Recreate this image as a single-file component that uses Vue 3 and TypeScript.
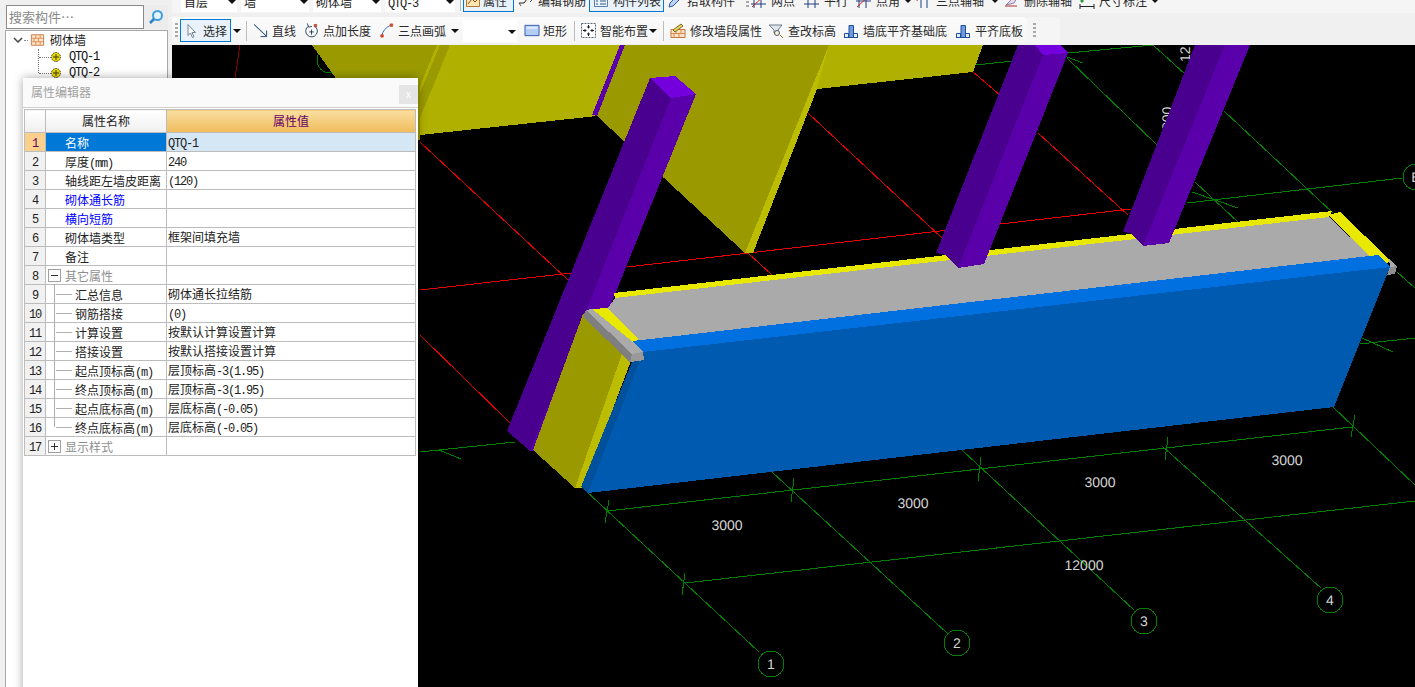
<script setup lang="ts">
interface Shape { d: string; s?: string; f?: string }
interface Tool { label: string; icon: string; w: number; on?: boolean; menu?: boolean; tight?: boolean }
interface Row { n: number; name: string; value: string; kind?: string }

const brick: Shape[] = [
  { d: 'M1 2h14v12H1z', s: '#c8743a', f: '#fbe3c8' },
  { d: 'M1 6h14M1 10h14M6 2v4M11 2v4M4 6v4M9 6v4M6 10v4M11 10v4', s: '#d8894c' },
]
const wallBase: Shape[] = [
  { d: 'M1 14.500h14M1.500 14.500v-4h4v4M10.500 14.500v-4h4v4', s: '#1f4f9a', f: '#e4eefb' },
  { d: 'M6 14.500V2.500h4.500v12z', s: '#1f4f9a', f: '#6f9ade' },
]
const icons: Record<string, Shape[]> = {
  attr: [
    { d: 'M1.500 3.500h13v10h-13z', s: '#b07a30', f: '#fbe7b4' },
    { d: 'M3 11l4-5 3 3 4-4', s: '#a04a10' },
  ],
  rebar: [
    { d: 'M1 10h5l3-4h7', s: '#222' },
    { d: 'M12 3l3 3-3 3M3 13l-2-3', s: '#555' },
  ],
  list: [
    { d: 'M1.500 2.500h13v11h-13z', s: '#5a7fa8', f: '#eaf2fb' },
    { d: 'M3 5h2M7 5h6M3 8h2M7 8h6M3 11h2M7 11h6', s: '#35577f' },
  ],
  pick: [
    { d: 'M2 14l1-4 8-8 3 3-8 8z', s: '#2a5ab0', f: '#bcd4f4' },
  ],
  two: [
    { d: 'M3 3v12M10 3v12M0 6h15M0 11h15', s: '#1f3f80' },
    { d: 'M1 14L14 2', s: '#d02020' },
  ],
  par: [
    { d: 'M4 2v13M11 2v13M0 6h15M0 11h15', s: '#1f3f80' },
  ],
  angle: [
    { d: 'M3 3v12M10 3v12M0 8h15', s: '#1f3f80' },
    { d: 'M1 14L14 2', s: '#d02020' },
  ],
  three: [
    { d: 'M5 3v12M11 3v12M1 6h14', s: '#1f3f80' },
    { d: 'M1 8Q2 2 8 1', s: '#d02020' },
  ],
  del: [
    { d: 'M2 12l6-6 6-3-4 7z', s: '#8a7aa8', f: '#e6def2' },
    { d: 'M1 13h12', s: '#b03030' },
  ],
  dim: [
    { d: 'M1 11v5M15 11v5M1 13.500h14', s: '#222' },
    { d: 'M2 2h2v2H2zM7 2h2v2H7zM2 7h2v2H2z', s: '#2a9a3a', f: '#2a9a3a' },
  ],
  select: [
    { d: 'M4 1.500v11l2.500-2.500 2 4.500 1.500-.7-2-4.300h3.500z', s: '#7a8696', f: '#fbfbfb' },
  ],
  line: [
    { d: 'M1 1.500l13 12.500', s: '#1f4468' },
    { d: 'M14.500 8v6.500H8', s: '#1f4468' },
    { d: 'M1.500 1.500l12.500 12', s: '#3f6a94' },
  ],
  extend: [
    { d: 'M4.500 3.500a6.200 6.200 0 1 0 6-.6', s: '#23405f' },
    { d: 'M3.500 0.500l1.500 4 3.500-1', s: '#23405f' },
    { d: 'M8 7v5.500M5.500 9.500h5', s: '#23405f' },
    { d: 'M11 1.500h2.500v2.500H11z', s: '#c0503a', f: '#c0503a' },
  ],
  arc: [
    { d: 'M3 14Q4 6 13 2', s: '#2a6ab0' },
    { d: 'M2 12.500h2.500v2.500H2zM12 1h2.500v2.500H12z', s: '#d0492c', f: '#d0492c' },
  ],
  rect: [
    { d: 'M.500 2.500h15v11H.500z', s: '#2a5ab0', f: '#b4ccf2' },
    { d: 'M2 4h12v2.500H2z', f: '#dbe7fa' },
  ],
  smart: [
    { d: 'M.500 .500h14v14H.500z', s: '#5a6a7a', f: '#fff' },
    { d: 'M7.500 2v3.500M6 4h3M7.500 13V9.500M6 11h3M2 7.500h3.500M4 6v3M13 7.500H9.500M11 6v3', s: '#222' },
  ],
  modify: [
    { d: 'M1 6.500h14v8H1z', s: '#c8743a', f: '#fbe3c8' },
    { d: 'M1 10.500h14M6 6.500v4M11 6.500v4M4 10.500v4M9 10.500v4', s: '#d8894c' },
    { d: 'M3 7l8-6 2 2-8 6z', s: '#7a6a20', f: '#e8d060' },
  ],
  check: [
    { d: 'M1 2h13l-4 5v3H6V7z', s: '#6a7a8a', f: '#dfe6ee' },
    { d: 'M12 12l3 3', s: '#a07020' },
    { d: 'M11.500 10a2.500 2.500 0 1 1-5 0 2.500 2.500 0 0 1 5 0z', s: '#556', f: '#f4f4d8' },
  ],
  wallBase,
}

const topTools: Tool[] = [
  { label: '属性', icon: 'attr', w: 51, on: true, tight: true },
  { label: '编辑钢筋', icon: 'rebar', w: 72 },
  { label: '构件列表', icon: 'list', w: 75, on: true },
  { label: '拾取构件', icon: 'pick', w: 79 },
]
const axisTools: Tool[] = [
  { label: '两点', icon: 'two', w: 53 },
  { label: '平行', icon: 'par', w: 52 },
  { label: '点角', icon: 'angle', w: 60, menu: true },
  { label: '三点辅轴', icon: 'three', w: 88, menu: true },
  { label: '删除辅轴', icon: 'del', w: 75 },
  { label: '尺寸标注', icon: 'dim', w: 85, menu: true },
]
const drawTools: Tool[] = [
  { label: '直线', icon: 'line', w: 51 },
  { label: '点加长度', icon: 'extend', w: 75 },
  { label: '三点画弧', icon: 'arc', w: 84, menu: true },
]
const placeTools: Tool[] = [
  { label: '修改墙段属性', icon: 'modify', w: 98 },
  { label: '查改标高', icon: 'check', w: 75 },
  { label: '墙底平齐基础底', icon: 'wallBase', w: 112 },
  { label: '平齐底板', icon: 'wallBase', w: 70 },
]

const rows: Row[] = [
  { n: 1, name: '名称', value: 'QTQ-1', kind: 'active' },
  { n: 2, name: '厚度(mm)', value: '240' },
  { n: 3, name: '轴线距左墙皮距离', value: '(120)' },
  { n: 4, name: '砌体通长筋', value: '', kind: 'link' },
  { n: 5, name: '横向短筋', value: '', kind: 'link' },
  { n: 6, name: '砌体墙类型', value: '框架间填充墙' },
  { n: 7, name: '备注', value: '' },
  { n: 8, name: '其它属性', value: '', kind: 'open' },
  { n: 9, name: '汇总信息', value: '砌体通长拉结筋', kind: 'child' },
  { n: 10, name: '钢筋搭接', value: '(0)', kind: 'child' },
  { n: 11, name: '计算设置', value: '按默认计算设置计算', kind: 'child' },
  { n: 12, name: '搭接设置', value: '按默认搭接设置计算', kind: 'child' },
  { n: 13, name: '起点顶标高(m)', value: '层顶标高-3(1.95)', kind: 'child' },
  { n: 14, name: '终点顶标高(m)', value: '层顶标高-3(1.95)', kind: 'child' },
  { n: 15, name: '起点底标高(m)', value: '层底标高(-0.05)', kind: 'child' },
  { n: 16, name: '终点底标高(m)', value: '层底标高(-0.05)', kind: 'child last' },
  { n: 17, name: '显示样式', value: '', kind: 'closed' },
]

// latin goes in a narrower mono run so it keeps the 6px cell of the original font
function runs(text: string): { t: string; latin: boolean }[] {
  return (text.match(/[\x00-\x7f]+|[^\x00-\x7f]+/g) || []).map((t) => ({ t, latin: t.charCodeAt(0) < 128 }))
}

const GREEN = '#008000'
const RED = '#e80000'
const lines: [string, string][] = [
  ['#8a0000', '240,45 235,78'],
  [RED, '420,142 568,280'],
  [RED, '420,290 572,273'],
  [RED, '627,267 1122,210 1131,209'],
  [RED, '420,335 510,423'],
  [RED, '748,253 772,275'],
  [RED, '808,113 942,238'],
  [RED, '973,72 1000,95'],
  [RED, '1038,133 1128,215'],
  [GREEN, '607,511 1352,427'],
  [GREEN, '685,583 1415,501'],
  [GREEN, '585,490 759,652'],
  [GREEN, '772,472 947,633'],
  [GREEN, '962,450 1134,610'],
  [GREEN, '1162,446 1321,588'],
  [GREEN, '1333,407 1415,485'],
  [GREEN, '609,500 605,523'],
  [GREEN, '794,478 791,502'],
  [GREEN, '981,457 978,481'],
  [GREEN, '1168,437 1165,460'],
  [GREEN, '1355,415 1351,437'],
  [GREEN, '685,573 682,595'],
  [GREEN, '976,65 1013,61'],
  [GREEN, '1068,53 1153,45'],
  [GREEN, '1187,203 1402,178'],
  [GREEN, '1067,58 1157,145'],
  [GREEN, '1195,182 1238,222'],
  [GREEN, '1067,57 1083,63'],
  [GREEN, '1192,192 1238,208'],
  [GREEN, '1153,45 1185,74'],
  [GREEN, '1224,111 1333,213'],
  [GREEN, '1397,272 1415,288'],
  [GREEN, '1360,344 1415,338'],
  [GREEN, '1362,338 1393,352'],
  [GREEN, '420,452 515,442'],
  [GREEN, '439,450 461,459'],
]
const OLIVE = '#9a9a00'
const LIGHT = '#b0b000'
const STRIP = '#bcbc00'
const P_DARK = '#4a008f'
const P_LIGHT = '#5a00aa'
const P_CAP = '#7400de'
const backWall: [string, string][] = [
  [OLIVE, '312,45 450,45 420,118 420,140 380,140'],
  [LIGHT, '437,45 440,45 420,93 420,86'],
  [LIGHT, '450,45 625,45 597,116 420,135 420,118'],
  [P_LIGHT, '620,45 625,45 597,116 592,115'],
  [OLIVE, '625,45 829,45 745,253 597,116'],
  [STRIP, '829,45 817,89 753,253 745,253'],
  [LIGHT, '829,45 983,45 973,72 817,89'],
]
const frontWall: [string, string][] = [
  [P_DARK, '650,78 671,98 530,451 507,431'],
  [P_LIGHT, '671,98 696,94 552,450 530,451'],
  [P_CAP, '650,78 675,76 696,94 671,98'],
  [OLIVE, '583,314 630,358 575,488 533,450'],
  [STRIP, '622,354 632,358 583,488 575,488'],
  ['#00509c', '632,362 643,358 588,493 581,487'],
  ['#005bb0', '643,352 1390,267 1334,407 588,493'],
  ['#aaaaaa', '615,298 1329,217 1370,256 633,341 608,308'],
  ['#e8e800', '614,293 1332,211 1329,217 615,298'],
  ['#e8e800', '1328,215 1340,212 1390,260 1387,263 1370,256'],
  ['#e8e800', '592,309 607,308 639,339 633,342'],
  ['#aaaaaa', '586,310 592,309 633,342 643,352 632,354'],
  ['#7f7f7f', '583,317 586,310 632,354 630,362'],
  ['#999999', '632,354 643,352 644,360 630,362'],
  ['#aaaaaa', '1389,259 1397,266 1390,267'],
  ['#8f8f8f', '1390,267 1397,266 1395,274 1387,275'],
  ['#0070e0', '633,341 1378,255 1390,267 643,352'],
  [P_DARK, '1018,45 1035,45 1043,55 958,268 946,255 936,253'],
  [P_LIGHT, '1043,55 1068,53 984,264 958,268'],
  [P_CAP, '1035,45 1060,45 1068,53 1043,55'],
  [P_DARK, '1195,45 1225,45 1143,246 1131,233 1123,232'],
  [P_LIGHT, '1225,45 1250,45 1169,243 1143,246'],
]
const bubbles = [
  { x: 771, y: 664, t: '1' },
  { x: 957, y: 643, t: '2' },
  { x: 1144, y: 621, t: '3' },
  { x: 1330, y: 600, t: '4' },
  { x: 1416, y: 177, t: 'B' },
]
const dims = [
  { x: 727, y: 530, t: '3000' },
  { x: 913, y: 508, t: '3000' },
  { x: 1100, y: 487, t: '3000' },
  { x: 1287, y: 465, t: '3000' },
  { x: 1084, y: 570, t: '12000' },
]
</script>

<template>
  <div class="app">
    <aside class="side">
      <div class="search">
        <div class="search-input">搜索构件…</div>
        <div class="search-btn">
          <svg width="16" height="16" viewBox="0 0 16 16" fill="none">
            <circle cx="9.500" cy="6.500" r="4.500" stroke="#3f9fe0" stroke-width="2" fill="#e4f3fd" />
            <path d="M6 10l-4 4" stroke="#2a80c8" stroke-width="2.500" />
          </svg>
        </div>
      </div>
      <div class="tree">
        <div class="tree-root">
          <svg class="chev" width="10" height="6" viewBox="0 0 10 6" fill="none"><path d="M1 1l4 4 4-4" stroke="#444" stroke-width="1.500" /></svg>
          <span class="dots"></span>
          <svg width="15" height="14" viewBox="0 0 16 16" fill="none">
            <path v-for="(sh, i) in brick" :key="i" :d="sh.d" :stroke="sh.s" :fill="sh.f || 'none'" />
          </svg>
          <span class="tree-label">砌体墙</span>
        </div>
        <div class="tree-kids">
          <div v-for="q in ['QTQ-1', 'QTQ-2']" :key="q" class="tree-kid">
            <span class="branch"></span>
            <svg width="10" height="10" viewBox="0 0 10 10"><circle cx="5" cy="5" r="4.500" fill="#e8d800" stroke="#3a3a10" stroke-dasharray="1.500 1" /><path d="M2 5h6M5 2v6" stroke="#3a3a10" /></svg>
            <span class="latin kid-label">{{ q }}</span>
          </div>
        </div>
      </div>
    </aside>

    <main class="main">
      <div class="bar bar-top">
        <div class="combo c1">首层<i class="caret"></i></div>
        <div class="combo c2">墙<i class="caret"></i></div>
        <div class="combo c3">砌体墙<i class="caret"></i></div>
        <div class="combo c4"><span class="latin">QTQ-3</span><i class="caret"></i></div>
        <span class="sep top-sep"></span>
        <div v-for="t in topTools" :key="t.label" class="tool" :class="{ on: t.on, tight: t.tight }" :style="{ width: t.w + 'px' }">
          <svg width="16" height="16" viewBox="0 0 16 16" fill="none"><path v-for="(sh, i) in icons[t.icon]" :key="i" :d="sh.d" :stroke="sh.s" :fill="sh.f || 'none'" /></svg>
          <span>{{ t.label }}</span>
        </div>
        <span class="grip"></span>
        <div v-for="t in axisTools" :key="t.label" class="tool" :style="{ width: t.w + 'px' }">
          <svg width="16" height="16" viewBox="0 0 16 16" fill="none"><path v-for="(sh, i) in icons[t.icon]" :key="i" :d="sh.d" :stroke="sh.s" :fill="sh.f || 'none'" /></svg>
          <span>{{ t.label }}</span>
          <i v-if="t.menu" class="caret inline"></i>
        </div>
      </div>

      <div class="bar bar-draw">
        <div class="strip">
          <span class="grip"></span>
          <div class="tool on pick-btn">
            <svg width="16" height="16" viewBox="0 0 16 16" fill="none"><path v-for="(sh, i) in icons.select" :key="i" :d="sh.d" :stroke="sh.s" :fill="sh.f || 'none'" /></svg>
            <span>选择</span>
          </div>
          <i class="caret arrow-slot"></i>
          <span class="sep s1"></span>
          <div v-for="t in drawTools" :key="t.label" class="tool" :style="{ width: t.w + 'px' }">
            <svg width="15" height="15" viewBox="0 0 16 16" fill="none"><path v-for="(sh, i) in icons[t.icon]" :key="i" :d="sh.d" :stroke="sh.s" :fill="sh.f || 'none'" /></svg>
            <span>{{ t.label }}</span>
            <i v-if="t.menu" class="caret inline"></i>
          </div>
          <div class="combo c5"><i class="caret"></i></div>
          <div class="tool rect-tool">
            <svg width="16" height="15" viewBox="0 0 16 16" fill="none"><path v-for="(sh, i) in icons.rect" :key="i" :d="sh.d" :stroke="sh.s" :fill="sh.f" /></svg>
            <span>矩形</span>
          </div>
          <span class="sep s2"></span>
          <div class="tool smart-tool">
            <svg width="15" height="15" viewBox="0 0 15 15" fill="none"><path v-for="(sh, i) in icons.smart" :key="i" :d="sh.d" :stroke="sh.s" :fill="sh.f || 'none'" :stroke-dasharray="i === 0 ? '2 1' : undefined" /></svg>
            <span>智能布置</span>
            <i class="caret after"></i>
          </div>
          <span class="sep s3"></span>
          <div v-for="t in placeTools" :key="t.label" class="tool" :style="{ width: t.w + 'px' }">
            <svg width="16" height="16" viewBox="0 0 16 16" fill="none"><path v-for="(sh, i) in icons[t.icon]" :key="i" :d="sh.d" :stroke="sh.s" :fill="sh.f || 'none'" /></svg>
            <span>{{ t.label }}</span>
          </div>
        </div>
        <div class="strip-end"><span class="grip"></span></div>
      </div>

      <svg class="scene" width="1243" height="642" viewBox="172 45 1243 642">
        <circle cx="330" cy="60" r="13" fill="none" :stroke="GREEN" />
        <rect x="327" y="61" width="2" height="2" fill="#ddd" />
        <polyline v-for="(l, i) in lines" :key="i" :points="l[1]" :stroke="l[0]" fill="none" />
        <text class="dim" transform="translate(1190 62) rotate(-90)">12</text>
        <text class="dim" transform="translate(1172 130) rotate(-90)">300</text>
        <polygon v-for="(b, i) in backWall" :key="'b' + i" :points="b[1]" :fill="b[0]" />
        <polygon v-for="(f, i) in frontWall" :key="'f' + i" :points="f[1]" :fill="f[0]" />
        <g v-for="b in bubbles" :key="b.t">
          <circle :cx="b.x" :cy="b.y" r="13" fill="#000" :stroke="GREEN" />
          <text class="dim mid" :x="b.x" :y="b.y + 5">{{ b.t }}</text>
        </g>
        <text v-for="d in dims" :key="d.x" class="dim mid" :x="d.x" :y="d.y">{{ d.t }}</text>
      </svg>
    </main>

    <section class="dialog">
      <header class="dialog-head">
        <span>属性编辑器</span>
        <button class="dialog-close">x</button>
      </header>
      <table class="grid">
        <colgroup><col class="c-n" /><col class="c-name" /><col class="c-value" /></colgroup>
        <thead>
          <tr><th class="num"></th><th class="h-name">属性名称</th><th class="h-value">属性值</th></tr>
        </thead>
        <tbody>
          <tr v-for="r in rows" :key="r.n" :class="r.kind">
            <td class="num"><div class="cell"><span class="latin">{{ r.n }}</span></div></td>
            <td class="name">
              <i v-if="r.kind === 'open' || r.kind === 'closed'" class="toggle"></i>
              <i v-if="r.kind && r.kind.startsWith('child')" class="twig"></i>
              <div class="cell"><span v-for="(run, i) in runs(r.name)" :key="i" :class="{ latin: run.latin }">{{ run.t }}</span></div>
            </td>
            <td class="value">
              <div class="cell"><span v-for="(run, i) in runs(r.value)" :key="i" :class="{ latin: run.latin }">{{ run.t }}</span></div>
            </td>
          </tr>
        </tbody>
      </table>
    </section>
  </div>
</template>

<style>
html, body { margin: 0; overflow: hidden; }
</style>

<style scoped>
.app {
  position: relative;
  display: flex;
  width: 1415px;
  height: 687px;
  overflow: hidden;
  background: #f0f0f0;
  font: 12px/16px "Noto Sans CJK SC", "Liberation Sans", sans-serif;
  color: #222;
}
.latin { font-family: "Liberation Mono", monospace; font-size: 12px; letter-spacing: -1.2px; color: inherit; }

/* left panel */
.side { width: 172px; flex: none; padding: 5px 4px 0 5px; box-sizing: border-box; display: flex; flex-direction: column; }
.search { display: flex; height: 24px; margin: 0 0 1px 1px; }
.search-input {
  width: 138px; box-sizing: border-box; border: 1px solid #8a8a8a; background: #fff;
  color: #8a8a8a; font-size: 13px; line-height: 21px; padding-left: 2px;
}
.search-btn { width: 24px; display: flex; align-items: center; justify-content: center; background: #ececec; }
.tree { flex: 1; background: #fff; border: 1px solid #a8a8a8; border-bottom: 0; }
.tree-root { display: flex; align-items: center; height: 16px; padding: 1px 0 0 7px; }
.chev { flex: none; }
.dots { width: 4px; margin: 0 2px 0 1px; border-bottom: 1px dotted #888; }
.tree-label { margin-left: 5px; }
.tree-kids { margin: 1px 0 0 32px; border-left: 1px dotted #777; height: 24px; }
.tree-kid { display: flex; align-items: center; height: 16px; }
.branch { width: 12px; border-bottom: 1px dotted #777; }
.kid-label { margin-left: 8px; color: #111; }

/* toolbars */
.main { flex: 1; min-width: 0; display: flex; flex-direction: column; }
.bar { display: flex; }
.bar svg { flex: none; }
.bar-top { height: 13px; align-items: flex-end; padding-left: 9px; background: #f5f5f5; }
.combo { position: relative; flex: none; box-sizing: border-box; height: 22px; background: #fff; padding-left: 3px; line-height: 24px; margin-right: 4px; }
.bar-top .combo { margin-bottom: 1px; }
.c1 { width: 56px; }
.c2 { width: 68px; }
.c3 { width: 68px; }
.c4 { width: 70px; }
.c5 { width: 54px; margin: 0 7px 0 0; }
.caret { flex: none; display: inline-block; width: 0; height: 0; border: 4px solid transparent; border-top-color: #111; border-bottom: 0; }
.combo .caret { position: absolute; right: 1px; top: 10px; }
.caret.inline { margin-left: auto; margin-right: 4px; }
.caret.after { margin-left: -3px; }
.sep { flex: none; width: 1px; height: 20px; background: #bdbdbd; }
.top-sep { margin: 0 2px 2px 1px; }
.grip {
  flex: none; width: 3px; height: 15px; margin: 0 2px 0 3px;
  background: repeating-linear-gradient(#a8a8a8 0 2px, transparent 2px 4px);
}
.tool {
  flex: none; box-sizing: border-box; display: flex; align-items: center; gap: 4px;
  height: 23px; white-space: nowrap; color: #2a2a2a;
}
.bar-top .tool { margin-bottom: 1px; padding-left: 1px; }
.bar-top .tool.on { padding-left: 3px; margin-right: 2px; }
.bar-top .tool.tight { padding-left: 1px; gap: 2px; margin-right: 3px; }
.bar-top .grip { margin: 0 1px 5px; }
.tool.on { border: 1px solid #0078d7; background: #e9f2fb; }
.bar-draw { height: 32px; padding-top: 4px; box-sizing: border-box; background: #f0f0f0; }
.strip {
  display: flex; align-items: center; width: 855px; height: 27px; box-sizing: border-box;
  background: linear-gradient(#fbfbfb, #f5f5f5); border-radius: 0 4px 4px 0;
}
.strip-end { width: 33px; height: 27px; padding-left: 3px; box-sizing: border-box; display: flex; align-items: center; background: #f5f5f5; border-radius: 4px; }
.pick-btn { width: 51px; padding-left: 3px; gap: 3px; }
.arrow-slot { margin: 0 0 0 2px; }
.s1 { margin: 0 6px 0 5px; }
.rect-tool { width: 46px; gap: 3px; }
.s2 { margin: 0 6px 0 4px; }
.smart-tool { width: 77px; }
.s3 { margin: 0 6px 0 5px; }

/* model view */
.scene { display: block; flex: none; background: #000; shape-rendering: crispEdges; }
.dim { font: 14px "Liberation Sans", sans-serif; fill: #d4d4d4; text-rendering: geometricPrecision; }
.mid { text-anchor: middle; }

/* property dialog */
.dialog {
  position: absolute; left: 23px; top: 78px; width: 395px; height: 620px;
  background: #fff; box-shadow: 0 0 9px rgba(0, 0, 0, 0.35);
}
.dialog-head {
  display: flex; align-items: flex-start; justify-content: space-between; height: 30px;
  padding: 6px 0 0 8px; color: #a2a2a2; border-bottom: 1px solid #cfcfcf; box-sizing: border-box;
  background: #fafafa;
}
.dialog-close {
  width: 19px; height: 19px; margin-top: 1px; padding: 0; border: 0; background: #e5e5e5; color: #fff;
  font: 10px "Liberation Sans", sans-serif;
}
.grid { width: 392px; margin: 1px 0 0 1px; border-collapse: collapse; table-layout: fixed; }
.c-n { width: 21px; }
.c-name { width: 121px; }
.grid th, .grid td { border: 1px solid #bcbcbc; padding: 0; font-weight: 400; white-space: nowrap; }
.grid th { height: 22px; background: linear-gradient(#fff, #efefef); color: #222; }
.grid th.h-value { background: linear-gradient(#f9dea2, #f0bc5a); color: #660066; }
.grid td { height: 18px; position: relative; }
.cell { height: 18px; line-height: 18px; overflow: hidden; }
.name .cell { line-height: 20px; }
.grid td.num { text-align: center; background: #f1f1f1; color: #222; }
.grid td.name { padding-left: 19px; }
.grid td.value { padding-left: 1px; }
.active td.num { background: #fbd08c; color: #660066; }
.active td.name { background: #0078d7; color: #fff; }
.active td.value { background: #d5e6f5; }
.link td.name { color: #0000ff; }
.open td.name, .closed td.name { color: #909090; }
.child td.name { padding-left: 29px; }
.toggle { position: absolute; left: 2px; top: 3px; width: 11px; height: 11px; border: 1px solid #a0a0a0; }
.toggle::before { content: ""; position: absolute; left: 2px; top: 5px; width: 7px; height: 1px; background: #333; }
.closed .toggle::after { content: ""; position: absolute; left: 5px; top: 2px; width: 1px; height: 7px; background: #333; }
.twig { position: absolute; left: 8px; top: -1px; bottom: -1px; width: 16px; border-left: 1px solid #b0b0b0; }
.twig::after { content: ""; position: absolute; left: 1px; top: 10px; width: 16px; height: 1px; background: #b0b0b0; }
.last .twig { bottom: 9px; }
</style>
